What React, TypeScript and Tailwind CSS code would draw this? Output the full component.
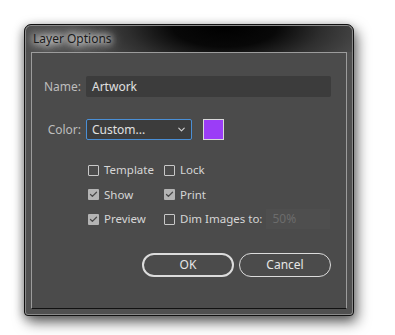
import { ChevronDown, Check } from "lucide-react";

const font = { fontFamily: '"Noto Sans", "Open Sans", sans-serif' };

function Box({ checked }: { checked?: boolean }) {
  return checked ? (
    <span className="w-[11px] h-[11px] rounded-[1px] bg-[#b4b4b4] flex items-center justify-center">
      <Check size={9} strokeWidth={3.5} className="text-[#4a4a4a]" />
    </span>
  ) : (
    <span className="w-[11px] h-[11px] rounded-[1px] border border-[#c8c8c8]" />
  );
}

function Opt({ label, checked }: { label: string; checked?: boolean }) {
  return (
    <label className="flex items-center gap-[5px] text-[11.5px] text-[#d6d6d6] h-[20px]">
      <Box checked={checked} />
      <span>{label}</span>
    </label>
  );
}

export default function App() {
  return (
    <div className="w-[395px] h-[335px] bg-white pt-[24px] pl-[24px]" style={font}>
      <div className="w-[330px] h-[292px] rounded-t-[7px] rounded-b-[4px] border border-[#111] shadow-[3px_6px_14px_rgba(0,0,0,0.6),-2px_2px_8px_rgba(0,0,0,0.25)] bg-[#505050] flex flex-col overflow-hidden">
        <div className="h-[27px] shrink-0 border-t border-l border-r border-[#8a8a8a] rounded-t-[6px] bg-[radial-gradient(ellipse_150px_60px_at_61%_0%,#000_0%,#080808_35%,#2e2e2e_65%,#4e4e4e_100%)] flex items-center pl-[7px]">
          <span className="text-[12px] text-[#1a1a1a] [text-shadow:0_0_6px_#fff,0_0_10px_#fff,0_0_14px_#fff]">Layer Options</span>
        </div>
        <div className="flex-1 flex flex-col px-[5px] pb-[5px] border-l border-r border-b border-[#8a8a8a] rounded-b-[3px]">
          <div className="flex-1 bg-[#4b4b4b] border border-[#9c9c9c] border-b-[#111] flex flex-col">
            <div className="flex items-center mt-[23px] h-[21px]">
              <span className="w-[54px] text-right pr-[5px] text-[12px] text-[#bdbdbd]">Name:</span>
              <div className="w-[245px] h-[21px] rounded-[2px] bg-[#3c3c3c] text-[12px] text-[#e0e0e0] flex items-center pl-[6px]">
                Artwork
              </div>
            </div>
            <div className="flex items-center mt-[22px] h-[21px]">
              <span className="w-[54px] text-right pr-[5px] text-[12px] text-[#bdbdbd]">Color:</span>
              <div className="w-[106px] h-[21px] rounded-[2px] border border-[#4a8fd6] bg-[#3c3c3c] text-[12px] text-[#e0e0e0] flex items-center justify-between pl-[5px] pr-[4px]">
                <span>Custom...</span>
                <ChevronDown size={11} strokeWidth={2.5} className="text-[#d0d0d0]" />
              </div>
              <div className="ml-[11px] w-[21px] h-[21px] bg-[#9b3df7] border border-[#d8d8d8]" />
            </div>
            <div className="flex mt-[20px] ml-[56px]">
              <div className="flex flex-col gap-[4.5px] w-[76px]">
                <Opt label="Template" />
                <Opt label="Show" checked />
                <Opt label="Preview" checked />
              </div>
              <div className="flex flex-col gap-[4.5px]">
                <Opt label="Lock" />
                <Opt label="Print" checked />
                <div className="flex items-center gap-[4px]">
                  <Opt label="Dim Images to:" />
                  <div className="w-[64px] h-[20px] bg-[#4e4e4e] text-[12px] text-[#6c6c6c] flex items-center pl-[6px]">50%</div>
                </div>
              </div>
            </div>
            <div className="flex justify-end gap-[5px] mt-[24px] pr-[15px]">
              <button className="w-[92px] h-[24px] rounded-full border-2 border-[#dcdcdc] text-[12px] text-[#e6e6e6]">OK</button>
              <button className="w-[92px] h-[24px] rounded-full border border-[#dcdcdc] text-[12px] text-[#e6e6e6]">Cancel</button>
            </div>
          </div>
        </div>
      </div>
    </div>
  );
}
